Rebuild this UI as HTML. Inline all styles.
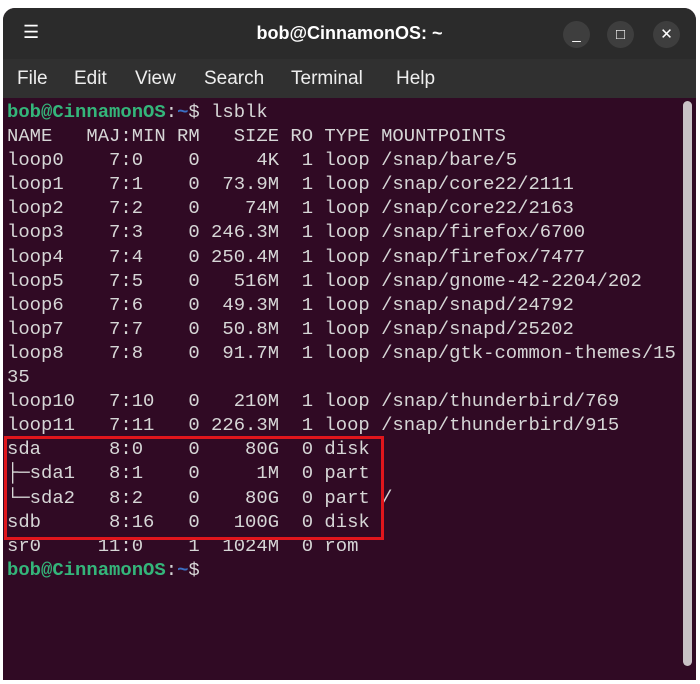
<!DOCTYPE html>
<html><head><style>
body{margin:0;width:700px;height:684px;background:#fff;overflow:hidden;position:relative;font-family:"Liberation Sans",sans-serif}
.win{position:absolute;left:3px;top:8px;width:693px;height:672px;border-radius:12px 12px 0 0;overflow:hidden;background:#300a24}
.title{position:absolute;left:0;top:0;width:100%;height:51px;background:#2b2b2b;color:#fff}
.title .t{position:absolute;left:0;right:0;top:15px;text-align:center;font-weight:bold;font-size:18px}
.btn{position:absolute;top:13px;width:27px;height:27px;border-radius:50%;background:#3e3e3e;color:#fff;text-align:center;line-height:27px;font-size:15px}
.menu{position:absolute;left:0;top:51px;width:100%;height:39px;background:#303030;color:#eee;font-size:19px}
.menu span{position:absolute;top:9px}
.term{position:absolute;left:4px;top:92px;font-family:"Liberation Mono",monospace;font-size:18.9px;line-height:24.1px;color:#d6d6d6;white-space:pre}
.g{color:#34b57a;font-weight:bold}.b{color:#3a6fc4;font-weight:bold}
.sb{position:absolute;left:680px;top:93px;width:9px;height:565px;border-radius:5px;background:#c9c2c6}
.box{position:absolute;left:4px;top:436px;width:374px;height:98px;border:3px solid #e0161c}
</style></head><body>
<div class="win">
<div class="title"><div style="position:absolute;left:20px;top:14px;font-size:18px">☰</div><div class="t">bob@CinnamonOS: ~</div>
<div class="btn" style="left:560px">_</div><div class="btn" style="left:604px">□</div><div class="btn" style="left:650px">✕</div></div>
<div class="menu"><span style="left:14px">File</span><span style="left:71px">Edit</span><span style="left:132px">View</span><span style="left:201px">Search</span><span style="left:288px">Terminal</span><span style="left:393px">Help</span></div>
<div class="sb"></div>
<div class="term"><span class="g">bob@CinnamonOS</span>:<span class="b">~</span>$ lsblk
NAME   MAJ:MIN RM   SIZE RO TYPE MOUNTPOINTS
loop0    7:0    0     4K  1 loop /snap/bare/5
loop1    7:1    0  73.9M  1 loop /snap/core22/2111
loop2    7:2    0    74M  1 loop /snap/core22/2163
loop3    7:3    0 246.3M  1 loop /snap/firefox/6700
loop4    7:4    0 250.4M  1 loop /snap/firefox/7477
loop5    7:5    0   516M  1 loop /snap/gnome-42-2204/202
loop6    7:6    0  49.3M  1 loop /snap/snapd/24792
loop7    7:7    0  50.8M  1 loop /snap/snapd/25202
loop8    7:8    0  91.7M  1 loop /snap/gtk-common-themes/15
35
loop10   7:10   0   210M  1 loop /snap/thunderbird/769
loop11   7:11   0 226.3M  1 loop /snap/thunderbird/915
sda      8:0    0    80G  0 disk 
├─sda1   8:1    0     1M  0 part 
└─sda2   8:2    0    80G  0 part /
sdb      8:16   0   100G  0 disk 
sr0     11:0    1  1024M  0 rom  
<span class="g">bob@CinnamonOS</span>:<span class="b">~</span>$</div>
</div>
<div class="box"></div>
</body></html>
